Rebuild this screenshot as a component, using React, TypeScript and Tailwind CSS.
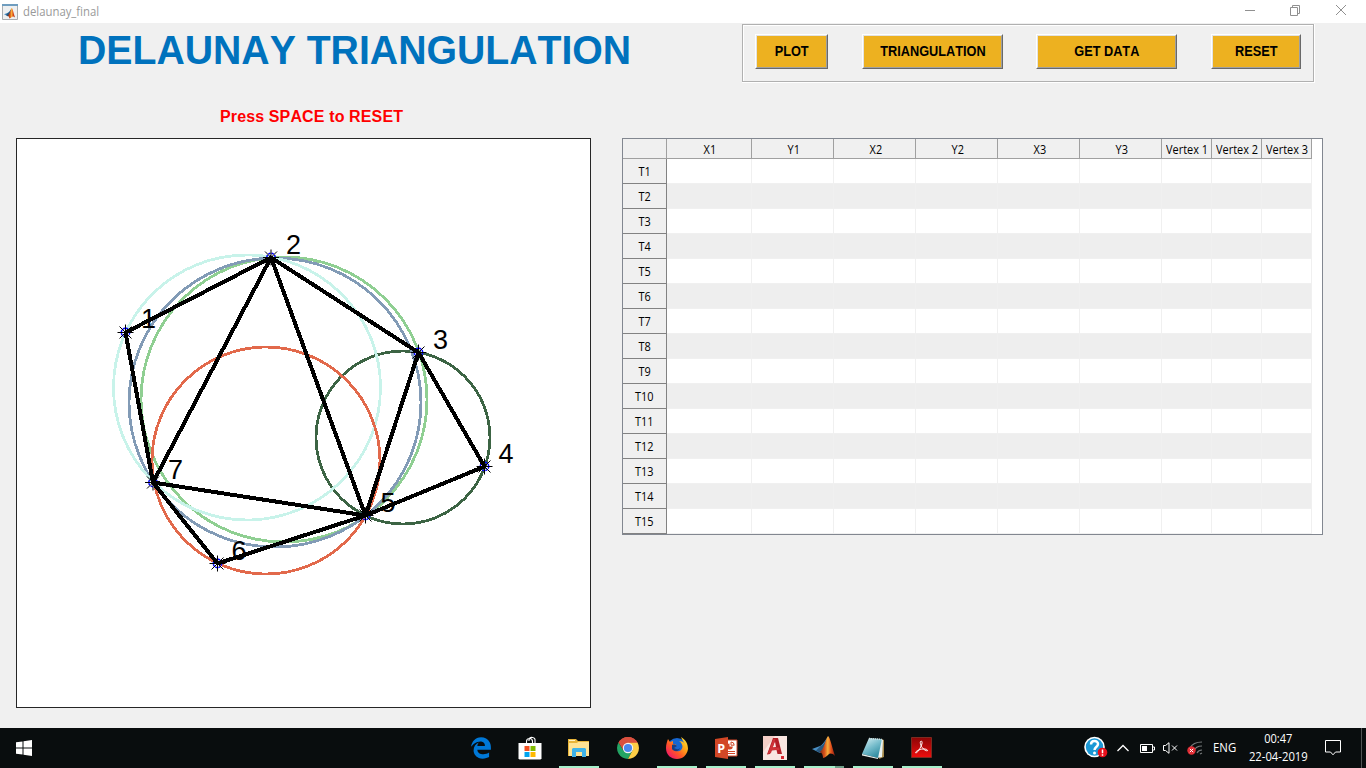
import React from "react";
import { FaEdgeLegacy } from "react-icons/fa";

type Point = [number, number];

const points: Point[] = [
  [125.5, 332.5],
  [271, 257.5],
  [418.5, 352.5],
  [484.5, 466.5],
  [365.5, 515.5],
  [217.5, 563.5],
  [153, 482.5],
];

const labels: Point[] = [
  [141, 327.5],
  [286, 254],
  [433, 349],
  [498.5, 462.5],
  [380.5, 512],
  [231.5, 559.5],
  [168, 478.5],
];

const edges: Point[] = [
  [1, 2], [2, 3], [3, 4], [4, 5], [5, 6], [6, 7], [7, 1], [2, 7], [2, 5], [3, 5], [5, 7],
];

const circles = [
  { cx: 403, cy: 437.5, rx: 87, ry: 86.5, color: "#3c6444" },
  { cx: 284, cy: 399.5, rx: 143, ry: 142.5, color: "#8fcf92" },
  { cx: 275, cy: 402.5, rx: 146, ry: 144.5, color: "#829bb6" },
  { cx: 247, cy: 387.5, rx: 133.5, ry: 132.5, color: "#c8f3ea" },
  { cx: 266, cy: 460.5, rx: 114, ry: 113.5, color: "#e2694b" },
];

function Marker({ p: [x, y] }: { p: Point }) {
  return (
    <g transform={`translate(${x} ${y})`}>
      <circle r="4.2" fill="none" stroke="#00f" strokeWidth="1.5" strokeDasharray="2.3 1" />
      <path d="M-8 0H8M0-8V8M-6-6 6 6M-6 6 6-6" stroke="#000" strokeWidth="1" />
    </g>
  );
}

function Plot() {
  return (
    <svg viewBox="17 139 573 568" className="block h-[568px] w-[573px]">
      <g fill="none" strokeWidth="2.8" shapeRendering="crispEdges">
        {circles.map((c) => (
          <ellipse key={c.color} cx={c.cx} cy={c.cy} rx={c.rx} ry={c.ry} stroke={c.color} />
        ))}
      </g>
      {points.map((p, i) => <Marker key={i} p={p} />)}
      {labels.map(([x, y], i) => (
        <text key={i} x={x} y={y} fontSize="27" fontFamily="Liberation Sans, sans-serif">{i + 1}</text>
      ))}
      <g stroke="#000" strokeWidth="4" strokeLinecap="round" shapeRendering="crispEdges">
        {edges.map(([a, b]) => (
          <line key={`${a}-${b}`} x1={points[a - 1][0]} y1={points[a - 1][1]} x2={points[b - 1][0]} y2={points[b - 1][1]} />
        ))}
      </g>
    </svg>
  );
}

function MatlabGlyph({ id }: { id: string }) {
  return (
    <>
      <defs>
        <linearGradient id={id} x1="0" x2="1">
          <stop offset="0" stopColor="#6b1c10" />
          <stop offset=".35" stopColor="#d8541c" />
          <stop offset=".55" stopColor="#f7b03c" />
          <stop offset=".75" stopColor="#e2501c" />
          <stop offset="1" stopColor="#8d1d12" />
        </linearGradient>
      </defs>
      <path d="M0 13 8 10C11 9 13 4 16 1L12 14 8 17Z" fill="#4a8fc4" />
      <path d="M4 14.5 8 10.5C12 9 13 5 16 1L11 14 8 17Z" fill="#28587f" />
      <path d="M16 0C18 1 20 11 23 20 20 17 18 17 16 19 14 21 12 22 11 22 11 18 9 16 7 16 12 15 13 4 16 0Z" fill={`url(#${id})`} />
    </>
  );
}

function PushButton({ label, className }: { label: string; className: string }) {
  return (
    <button
      className={`h-[35px] border border-t-white border-r-[#696969] border-b-[#696969] border-l-white ${className}`}
    >
      <span className="flex h-full items-center justify-center border border-t-[#e3e3e3] border-r-[#a0a0a0] border-b-[#a0a0a0] border-l-[#e3e3e3] bg-[#edb120] text-[14px] font-bold whitespace-nowrap text-black [font-kerning:none]">
        <span className="origin-center scale-x-[0.91]">{label}</span>
      </span>
    </button>
  );
}

const columns = ["X1", "Y1", "X2", "Y2", "X3", "Y3", "Vertex 1", "Vertex 2", "Vertex 3"];
const gridCols = "grid grid-cols-[44px_85px_82px_82px_82px_82px_82px_50px_50px_50px]";

function DataTable() {
  return (
    <div className="h-[397px] w-[701px] overflow-hidden border border-[#828790] bg-white font-['Open_Sans','Noto_Sans',sans-serif] text-xs text-black">
      <div className={`${gridCols} h-5 w-[689px]`}>
        <div className="border-r border-b border-[#a0a0a0] bg-[#f0f0f0]" />
        {columns.map((c) => (
          <div key={c} className="flex items-center justify-center border-r border-b border-[#a0a0a0] bg-[#f0f0f0] pt-[2px] pl-[2px] whitespace-nowrap">
            <span className="-mx-1 scale-x-[0.91]">{c}</span>
          </div>
        ))}
      </div>
      {Array.from({ length: 15 }, (_, r) => (
        <div key={r} className={`${gridCols} h-[25px] w-[689px]`}>
          <div className="flex items-center justify-center border-r border-b border-[#828282] bg-[#f0f0f0] pt-px">
            <span className="scale-x-[0.91]">T{r + 1}</span>
          </div>
          {columns.map((c) => (
            <div key={c} className={`border-r border-b border-[#f0f0f0] ${r % 2 ? "bg-[#eeeeee]" : "bg-white"}`} />
          ))}
        </div>
      ))}
    </div>
  );
}

function StoreIcon() {
  return (
    <svg viewBox="0 0 24 24" className="h-6 w-6">
      <path d="M8.5 8V5.5a3 3 0 0 1 6 0V8M11 5V4a2.500 2.500 0 0 1 6 1v3" fill="none" stroke="#fff" strokeWidth="1.1" />
      <path d="M.5 7h23v15.500l-1 1h-21l-1-1Z" fill="#fff" />
      <path d="M6.500 10h5v5h-5z" fill="#f25022" />
      <path d="M12.500 10h5v5h-5z" fill="#7fba00" />
      <path d="M6.500 16h5v5h-5z" fill="#00a4ef" />
      <path d="M12.500 16h5v5h-5z" fill="#ffb900" />
    </svg>
  );
}

function ExplorerIcon() {
  return (
    <svg viewBox="0 0 22 20" className="h-5 w-[22px]">
      <path d="M0 1h8l2 2h11v15H0Z" fill="#e8b53a" />
      <path d="M1 2h6v1H1z" fill="#fff3c4" />
      <path d="M1 5h8l1-1h11v14H1Z" fill="#ffe394" />
      <path d="M4 19v-8l1-1h12l1 1v8h-4v-5H8v5Z" fill="#3fb3e8" />
    </svg>
  );
}

function ChromeIcon() {
  return (
    <svg viewBox="-11 -11 22 22" className="h-[22px] w-[22px]">
      <path d="M0 0-9.500-5.500A11 11 0 0 1 9.500-5.500Z" fill="#d9503f" />
      <path d="M-9.500-5.500A11 11 0 0 0 0 11L4.500 2.500-4.500 2.500Z" fill="#23a464" />
      <path d="M9.500-5.500A11 11 0 0 1 0 11L4.500 2.500 0-5.500Z" fill="#fccd46" />
      <path d="M-9.500-5.500A11 11 0 0 1 9.500-5.500L0-5.200-4.500 2.500Z" fill="#d9503f" />
      <circle r="5.200" fill="#f4f4f4" />
      <circle r="4.100" fill="#4a87ee" />
    </svg>
  );
}

function FirefoxIcon() {
  return (
    <svg viewBox="0 0 24 24" className="h-6 w-6">
      <defs>
        <linearGradient id="fox" x1="1" y1="0" x2="0.100" y2="0.900">
          <stop offset="0" stopColor="#fff04a" />
          <stop offset=".35" stopColor="#ffae17" />
          <stop offset=".65" stopColor="#ff5a24" />
          <stop offset="1" stopColor="#f0146b" />
        </linearGradient>
      </defs>
      <circle cx="12" cy="11.500" r="9.500" fill="#1767d2" />
      <path d="M3 3 5 6 8 5 8 8C10 8 12 9 11 10L8 12C9 16 14 16 16 14 19 11 17 7 14 5 19 5 20 8 20 10 20 7 17 4 16 1 21 4 23 8 23 13 22 19 18 23 12 23 6 23 1 19 1 12 1 8 2 6 3 3Z" fill="url(#fox)" />
      <path d="M7 9c2-1 4 0 5 1l-3 2c2 1 4 2 6 0-1 4-6 4-8 1Z" fill="#173d83" />
    </svg>
  );
}

function PowerPointIcon() {
  return (
    <svg viewBox="0 0 24 24" className="h-6 w-6">
      <path d="M12 4h11v16H12z" fill="#fff" stroke="#d24726" strokeWidth="1" />
      <path d="M15.500 7.500a3 3 0 1 0 3.300 3h-3.300Z" fill="#d24726" />
      <path d="M17 6a3.200 3.200 0 0 1 3.200 3.200H17Z" fill="#fff" stroke="#d24726" />
      <path d="M14 15.500h7M14 17.500h7" stroke="#d24726" strokeWidth="1" />
      <path d="M1 3 14 1v22L1 21Z" fill="#d24726" />
      <text x="3.200" y="16.500" fontSize="12.500" fontWeight="700" fontFamily="Open Sans, sans-serif" fill="#fff">P</text>
    </svg>
  );
}

function AutocadIcon() {
  return (
    <svg viewBox="0 0 24 24" className="h-6 w-6">
      <path d="M0 0h24v24H0z" fill="#f9e6e1" />
      <path d="M0 0h12L0 16Z" fill="#f4cfc7" />
      <path d="M10 2h5l4 16h-4.500l-1-4-5 .5-1.500 3.500-3 .500Z" fill="#b31e26" />
      <path d="m12 5.500-2.500 6 3.500-.5Z" fill="#f9e6e1" />
      <path d="m4.500 18 6-15h2L8 17ZM8.500 11.500l7.500 0 .5 2.500h-9Z" fill="#cf3338" />
      <path d="M18 20h3v3h-3z" fill="#d42730" />
    </svg>
  );
}

function NotepadIcon() {
  return (
    <svg viewBox="0 0 24 24" className="h-6 w-6">
      <defs>
        <linearGradient id="pad" x1="0" y1="0" x2=".6" y2="1">
          <stop offset="0" stopColor="#dff4f7" />
          <stop offset=".55" stopColor="#75bccb" />
          <stop offset="1" stopColor="#318da2" />
        </linearGradient>
      </defs>
      <path d="m20 3 3 1v17l-5 2Z" fill="#a58a4d" />
      <path d="m20 3 2 1-1 17-5 1Z" fill="#eaf2f2" />
      <path d="M8 2 21 3 17 22 1 18Z" fill="url(#pad)" />
      <path d="m1 18 16 4v1L1 19.500Z" fill="#e8f1ef" />
      <path d="M8 2.500 21 3.500" stroke="#d4e0df" strokeWidth="1.500" strokeDasharray="1 1" />
    </svg>
  );
}

function AcrobatIcon() {
  return (
    <svg viewBox="0 0 21 21" className="h-[21px] w-[21px]">
      <defs>
        <linearGradient id="pdf" x1="0" y1="0" x2="0" y2="1">
          <stop offset="0" stopColor="#8c0505" />
          <stop offset=".45" stopColor="#b80909" />
          <stop offset="1" stopColor="#f00e0e" />
        </linearGradient>
      </defs>
      <path d="M.5.5h20v20H.5z" fill="url(#pdf)" stroke="#7d2a20" />
      <path d="M10 4c-1.800 1 0 6.500 3.800 9 4.200 2.500 3.700-1.500-1.800-1-4 .2-7.500 2.500-7.500 3.700C6.200 17 10 10 10.900 7c.5-2 0-3-.9-3Z" fill="none" stroke="#fff" strokeWidth="1" />
    </svg>
  );
}

const apps = [
  { name: "edge", icon: <FaEdgeLegacy className="h-[22px] w-[22px] text-[#0078d7]" />, running: false },
  { name: "store", icon: <StoreIcon />, running: false },
  { name: "explorer", icon: <ExplorerIcon />, running: true },
  { name: "chrome", icon: <ChromeIcon />, running: false },
  { name: "firefox", icon: <FirefoxIcon />, running: true },
  { name: "powerpoint", icon: <PowerPointIcon />, running: true },
  { name: "autocad", icon: <AutocadIcon />, running: true },
  { name: "matlab", icon: <svg viewBox="0 0 24 24" className="h-6 w-6"><MatlabGlyph id="mlTask" /></svg>, running: true },
  { name: "notepad", icon: <NotepadIcon />, running: true },
  { name: "acrobat", icon: <AcrobatIcon />, running: true },
];

function Taskbar() {
  return (
    <footer className="flex h-10 w-full bg-[#090d0e] font-['Open_Sans','Noto_Sans',sans-serif] text-white">
      <div className="flex w-[461px] items-center pl-4">
        <svg viewBox="0 0 16 16" className="h-4 w-4" fill="#fff">
          <path d="M0 2.300 6.500 1.400V7.500H0ZM7.500 1.200 16 0v7.500H7.500ZM0 8.500h6.500v6.100L0 13.700ZM7.500 8.500H16V16l-8.500-1.200Z" />
        </svg>
      </div>
      <nav className="flex w-[481px] gap-[9px]">
        {apps.map((a) => (
          <div key={a.name} className="flex h-10 w-10 flex-col">
            <div className={`flex h-[38px] items-center justify-center ${a.name === "acrobat" ? "pr-px" : "pt-[2px]"}`}>{a.icon}</div>
            <div className={`flex h-[2px] justify-end ${a.running ? "bg-[#a6f0cb]" : ""}`}>
              {a.name === "matlab" && <div className="w-[9px] bg-[#6f9f88]" />}
            </div>
          </div>
        ))}
      </nav>
      <div className="flex flex-1 items-center pl-[142px]">
        <svg viewBox="0 0 24 24" className="h-6 w-6 shrink-0">
          <circle cx="10.500" cy="11" r="10.300" fill="#fff" />
          <circle cx="10.500" cy="11" r="8.700" fill="#1b98d5" />
          <path d="M7 8.500C7 4 14 4 14 8c0 3-3.500 3-3.500 6" fill="none" stroke="#fff" strokeWidth="2.500" />
          <circle cx="10.500" cy="17" r="1.500" fill="#fff" />
          <circle cx="18.500" cy="16.500" r="4.800" fill="#e8101c" />
          <path d="M18.500 13.500v3.800M18.500 18.300v1.400" stroke="#fff" strokeWidth="1.500" />
        </svg>
        <svg viewBox="0 0 14 8" className="ml-2 h-2 w-[14px] shrink-0">
          <path d="m1.500 7 5.500-5.500L12.500 7" fill="none" stroke="#fff" strokeWidth="1.300" />
        </svg>
        <svg viewBox="0 0 15 9" className="ml-[10px] h-[9px] w-[15px] shrink-0">
          <path d="M.5.5h12v8H.5ZM13 3h1.500v3H13" fill="none" stroke="#fff" />
          <path d="M2 2h5v5H2z" fill="#fff" />
        </svg>
        <svg viewBox="0 0 15 12" className="ml-2 h-3 w-[15px] shrink-0" fill="none" stroke="#fff">
          <path d="M.5 3.500h2L6 .7v10.600L2.500 8.500h-2ZM9 3.500l5 5M14 3.500l-5 5" />
        </svg>
        <svg viewBox="0 0 16 14" className="ml-[9px] h-[14px] w-4 shrink-0">
          <path d="M3 7C5 3 10 1 15 1M7 10c1-3 4-5 8-5M10 12c1-2 2-3 5-3M13 13l2-1" fill="none" stroke="#777b7c" strokeWidth="1.200" />
          <circle cx="4.500" cy="9.500" r="4.200" fill="#e22d35" />
          <path d="m2.800 7.800 3.400 3.400M6.200 7.800l-3.400 3.400" stroke="#fff" />
        </svg>
        <div className="ml-[10px] w-6 text-center text-xs whitespace-nowrap">
          <div className="origin-left scale-x-[0.95]">ENG</div>
        </div>
        <div className="ml-[9px] flex w-[64px] flex-col items-center text-xs leading-[18px] whitespace-nowrap">
          <span className="scale-x-[0.92]">00:47</span>
          <span className="scale-x-[0.94]">22-04-2019</span>
        </div>
        <svg viewBox="0 0 17 16" className="ml-[15px] h-4 w-[17px] shrink-0" fill="none" stroke="#fff">
          <path d="M.5.500h15v11.500h-5l-2.500 2.800-2.500-2.800h-5Z" />
        </svg>
        <div className="ml-[19px] h-10 w-px bg-[#505454]" />
      </div>
    </footer>
  );
}

export default function App() {
  return (
    <div className="flex h-[768px] w-[1366px] flex-col overflow-hidden bg-[#f0f0f0] font-['Liberation_Sans',Arial,sans-serif]">
      <header className="flex h-[23px] shrink-0 items-center justify-between bg-white pr-[19px] pl-[2px]">
        <div className="flex items-center gap-[5px]">
          <svg viewBox="0 0 16 16" className="h-4 w-4">
            <path d="M.5.5h15v15H.5z" fill="#eef0f1" stroke="#a9adb0" />
            <path d="M0 0h16v2H0z" fill="#6f9dbf" />
            <g transform="translate(2 4) scale(.48)"><MatlabGlyph id="mlTitle" /></g>
          </svg>
          <span className="origin-left scale-x-[0.945] font-['Open_Sans','Noto_Sans',sans-serif] text-xs text-[#999]">delaunay_final</span>
        </div>
        <svg viewBox="0 0 102 12" className="mb-[3px] h-3 w-[102px]" fill="none" stroke="#909090">
          <path d="M0 6.500h10M45.500 3.500h7v8h-7ZM47.500 3.500v-2h7v8h-2M91 1l10 10M101 1l-10 10" />
        </svg>
      </header>

      <main className="flex h-[705px] shrink-0">
        <section className="flex w-[606px] flex-col pl-4">
          <h1 className="mt-[4px] h-[46px] pl-[62px] text-[40px] leading-[46px] font-bold whitespace-nowrap text-[#0072bd] [font-kerning:none]">
            <span className="inline-block origin-left scale-x-[0.98]">DELAUNAY TRIANGULATION</span>
          </h1>
          <p className="mt-[34px] h-5 pl-[204px] text-base leading-5 font-bold tracking-[0.13px] whitespace-nowrap text-[#f00] [font-kerning:none]">
            Press SPACE to RESET
          </p>
          <div className="mt-[11px] h-[570px] w-[575px] border border-[#262626] bg-white">
            <Plot />
          </div>
        </section>

        <section className="flex flex-1 flex-col pl-4">
          <div className="mt-px ml-[120px] h-[59px] w-[573px] border-r border-b border-white">
            <div className="h-[58px] w-[572px] border border-[#b0b0b0]">
              <div className="flex h-full border-t border-l border-white pt-[8px] pl-[11px]">
                <PushButton label="PLOT" className="w-[73px]" />
                <PushButton label="TRIANGULATION" className="ml-[34px] w-[141px]" />
                <PushButton label="GET DATA" className="ml-[33px] w-[141px]" />
                <PushButton label="RESET" className="ml-[34px] w-[90px]" />
              </div>
            </div>
          </div>
          <div className="mt-[55px]">
            <DataTable />
          </div>
        </section>
      </main>

      <Taskbar />
    </div>
  );
}
